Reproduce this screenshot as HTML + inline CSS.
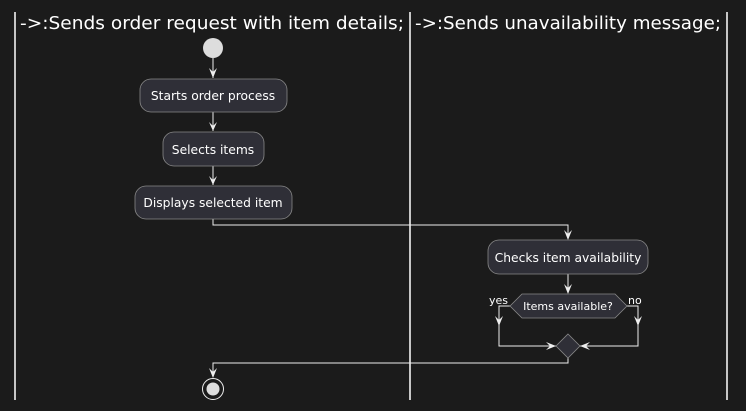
<!DOCTYPE html><html><head><style>body{margin:0;background:#1b1b1b}svg{display:block}text{font-family:"DejaVu Sans","Liberation Sans",sans-serif;fill:#fff}</style></head><body>
<svg width="746" height="411" viewBox="0 0 746 411">
<rect width="746" height="411" fill="#1b1b1b"/>
<g stroke="#fff" stroke-width="1.5"><line x1="15" y1="12" x2="15" y2="400"/><line x1="410" y1="12" x2="410" y2="400"/><line x1="727" y1="12" x2="727" y2="400"/></g>
<text x="20" y="29" font-size="18" textLength="384" lengthAdjust="spacingAndGlyphs">-&gt;:Sends order request with item details;</text>
<text x="415" y="29" font-size="18" textLength="306" lengthAdjust="spacingAndGlyphs">-&gt;:Sends unavailability message;</text>
<circle cx="213" cy="48" r="10" fill="#ddd"/>
<g stroke="#eee" stroke-width="1" fill="none">
<line x1="213" y1="58" x2="213" y2="78"/><line x1="213" y1="112" x2="213" y2="131"/><line x1="213" y1="166" x2="213" y2="185"/>
<polyline points="213,219 213,225 568,225 568,239"/>
<line x1="568" y1="274" x2="568" y2="293"/>
<polyline points="510,306 499,306 499,346 556,346"/>
<polyline points="627,306 638,306 638,346 580,346"/>
<polyline points="568,358 568,363 213,363 213,377"/>
</g>
<g fill="#eee">
<path d="M209,68 L213,78 L217,68 L213,72Z"/><path d="M209,122 L213,131 L217,122 L213,126Z"/><path d="M209,176 L213,185 L217,176 L213,180Z"/>
<path d="M564,230 L568,240 L572,230 L568,234Z"/><path d="M564,284 L568,294 L572,284 L568,288Z"/>
<path d="M495,316 L499,326 L503,316 L499,320Z"/><path d="M634,316 L638,326 L642,316 L638,320Z"/>
<path d="M546,342 L556,346 L546,350 L550,346Z"/><path d="M590,342 L580,346 L590,350 L586,346Z"/>
<path d="M209,368 L213,378 L217,368 L213,372Z"/>
</g>
<g fill="#2f2f37" stroke="#888" stroke-width="0.8">
<rect x="140" y="79" width="147" height="33" rx="11"/>
<rect x="163" y="132" width="101" height="34" rx="11"/>
<rect x="135" y="186" width="157" height="33" rx="11"/>
<rect x="488" y="240" width="160" height="34" rx="11"/>
<polygon points="510,306 522,294 615,294 627,306 615,318 522,318"/>
<polygon points="568,334 580,346 568,358 556,346"/>
</g>
<g font-size="12.3" text-anchor="middle">
<text x="213" y="100">Starts order process</text>
<text x="213" y="154">Selects items</text>
<text x="213" y="207">Displays selected item</text>
<text x="568" y="262">Checks item availability</text>
<text x="568" y="310" font-size="11">Items available?</text>
</g>
<text x="489" y="304" font-size="11">yes</text><text x="628" y="304" font-size="11">no</text>
<circle cx="213" cy="389" r="10.5" fill="none" stroke="#eee" stroke-width="1"/>
<circle cx="213" cy="389" r="6.5" fill="#ddd"/>
</svg></body></html>
